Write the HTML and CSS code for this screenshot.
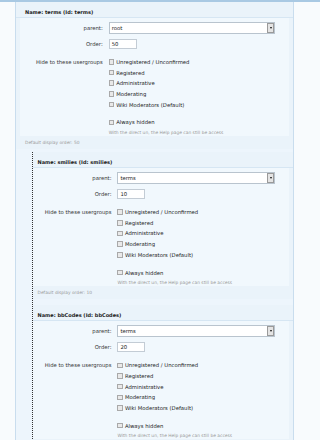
FILE: index.html
```html
<!DOCTYPE html>
<html>
<head>
<meta charset="utf-8">
<link rel="stylesheet" href="styles.css">
</head>
<body>
<div class="panel">
  <div class="node">
    <div class="node-head">Name: terms (Id: terms)</div>
    <div class="node-body">
      <div class="label">parent:</div>
      <div class="ctrl"><div class="select"><span class="sel-text">root</span><span class="sel-btn"><span class="arrow"></span></span></div></div>
      <div class="label row-order">Order:</div>
      <div class="ctrl row-order"><div class="input">50</div></div>
      <div class="label row-hide">Hide to these usergroups</div>
      <div class="ctrl row-hide">
        <div class="check"><span class="cb"></span>Unregistered / Unconfirmed</div>
        <div class="check"><span class="cb"></span>Registered</div>
        <div class="check"><span class="cb"></span>Administrative</div>
        <div class="check"><span class="cb"></span>Moderating</div>
        <div class="check"><span class="cb"></span>Wiki Moderators (Default)</div>
        <div class="check always"><span class="cb"></span>Always hidden</div>
        <div class="help">With the direct un, the Help page can still be access</div>
      </div>
    </div>
    <div class="node-foot">Default display order: 50</div>
  </div>
  <div class="children">
    <div class="node child">
      <div class="node-head">Name: smilies (Id: smilies)</div>
      <div class="node-body">
        <div class="label">parent:</div>
        <div class="ctrl"><div class="select"><span class="sel-text">terms</span><span class="sel-btn"><span class="arrow"></span></span></div></div>
        <div class="label row-order">Order:</div>
        <div class="ctrl row-order"><div class="input">10</div></div>
        <div class="label row-hide">Hide to these usergroups</div>
        <div class="ctrl row-hide">
          <div class="check"><span class="cb"></span>Unregistered / Unconfirmed</div>
          <div class="check"><span class="cb"></span>Registered</div>
          <div class="check"><span class="cb"></span>Administrative</div>
          <div class="check"><span class="cb"></span>Moderating</div>
          <div class="check"><span class="cb"></span>Wiki Moderators (Default)</div>
          <div class="check always"><span class="cb"></span>Always hidden</div>
          <div class="help">With the direct un, the Help page can still be access</div>
        </div>
      </div>
      <div class="node-foot">Default display order: 10</div>
    </div>
    <div class="node child">
      <div class="node-head">Name: bbCodes (Id: bbCodes)</div>
      <div class="node-body">
        <div class="label">parent:</div>
        <div class="ctrl"><div class="select"><span class="sel-text">terms</span><span class="sel-btn"><span class="arrow"></span></span></div></div>
        <div class="label row-order">Order:</div>
        <div class="ctrl row-order"><div class="input">20</div></div>
        <div class="label row-hide">Hide to these usergroups</div>
        <div class="ctrl row-hide">
          <div class="check"><span class="cb"></span>Unregistered / Unconfirmed</div>
          <div class="check"><span class="cb"></span>Registered</div>
          <div class="check"><span class="cb"></span>Administrative</div>
          <div class="check"><span class="cb"></span>Moderating</div>
          <div class="check"><span class="cb"></span>Wiki Moderators (Default)</div>
          <div class="check always"><span class="cb"></span>Always hidden</div>
          <div class="help">With the direct un, the Help page can still be access</div>
        </div>
      </div>
      <div class="node-foot">Default display order: 20</div>
    </div>
  </div>
</div>
</body>
</html>
```
FILE: styles.css
```css
html, body {
  margin: 0;
  padding: 0;
}
body {
  background: #f8fbfd;
  font-family: "DejaVu Sans", sans-serif;
  color: #2b2b2b;
  border-top: 2px solid #a9c9e3;
  height: 438px;
  overflow: hidden;
}
.panel {
  margin-left: 15px;
  width: 277px;
  min-height: 438px;
  border-left: 1px solid #c9ddee;
  border-right: 1px solid #c9ddee;
  background: #edf5fc;
}
.node {
  background: #eaf3fa;
  padding-bottom: 3px;
}
.node-head {
  padding: 6px 0 1px 9px;
  line-height: 8px;
  height: 8px;
  font-size: 5px;
  font-weight: bold;
  color: #222;
  border-bottom: 1px solid #d6e6f3;
}
.node-body {
  margin: 0 4px;
  padding: 4px 5px 0 5px;
  background: #f1f8fd;
  display: grid;
  grid-template-columns: 30% 1fr;
  column-gap: 6px;
  align-items: start;
  font-size: 5.3px;
}
.label {
  text-align: right;
  line-height: 12px;
  color: #333;
  white-space: nowrap;
}
.row-order {
  margin-top: 5px;
}
.row-order.label {
  line-height: 10px;
}
.row-hide {
  margin-top: 7.5px;
}
.row-hide.label {
  line-height: 10.7px;
}
.select {
  display: flex;
  height: 12px;
  box-sizing: border-box;
  border: 1px solid #b9c4ce;
  background: #fff;
  margin-right: 9px;
}
.sel-text {
  flex: 1;
  padding-left: 2px;
  line-height: 10px;
  color: #222;
}
.sel-btn {
  width: 7px;
  box-sizing: border-box;
  border: 1px solid #9a9a9a;
  background: #e4e4e4;
  display: flex;
  align-items: center;
  justify-content: center;
}
.arrow {
  width: 0;
  height: 0;
  border-left: 1.5px solid transparent;
  border-right: 1.5px solid transparent;
  border-top: 2px solid #111;
}
.input {
  width: 28px;
  height: 10px;
  box-sizing: border-box;
  border: 1px solid #c3ccd5;
  background: #fff;
  padding-left: 2px;
  line-height: 8px;
  color: #222;
}
.check {
  display: flex;
  align-items: center;
  height: 10.7px;
  white-space: nowrap;
  color: #222;
}
.cb {
  width: 5.5px;
  height: 5.5px;
  box-sizing: border-box;
  border: 1px solid #a9a9a9;
  background: #e9e9e9;
  margin-right: 2px;
  flex: none;
}
.always {
  margin-top: 7px;
}
.help {
  margin-top: 2px;
  line-height: 6px;
  font-size: 4.4px;
  color: #9a9a9a;
  white-space: nowrap;
}
.node-foot {
  margin-top: 4.6px;
  padding-left: 9px;
  line-height: 6px;
  font-size: 4.4px;
  color: #9a9a9a;
}
.children {
  margin-top: 3px;
  margin-left: 16px;
  border-left: 1px dotted #333;
}
.child + .child {
  margin-top: 6px;
}
.child .node-head {
  padding-left: 4.5px;
}
.child .node-foot {
  padding-left: 4.5px;
}
.child .node-body {
  margin-left: 0;
  padding-left: 4.5px;
}
```
